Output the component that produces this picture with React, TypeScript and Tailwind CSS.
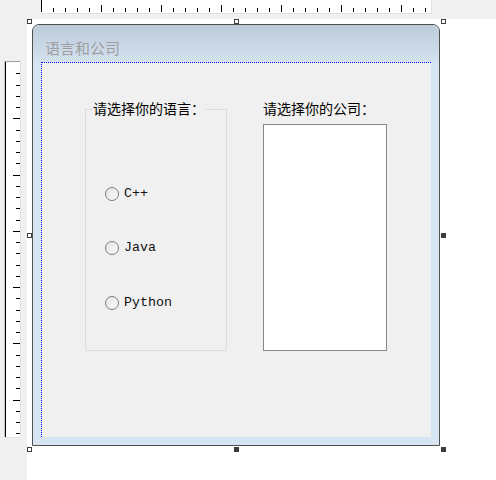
import React from 'react';

const hTicks = Array.from({ length: 32 }, (_, i) => i);
const vTicks = Array.from({ length: 33 }, (_, i) => i);

function HRuler() {
  return (
    <svg width="391" height="14" className="block">
      <rect x="0" y="0" width="391" height="14" fill="#fff" />
      <line x1="0.5" y1="0" x2="0.5" y2="12" stroke="#000" />
      {hTicks.map(i => {
        const x = Math.round(12 + 12 * i) + 0.5;
        const long = i % 5 === 4;
        return <line key={i} x1={x} x2={x} y1={long ? 5 : 8} y2={12} stroke="#000" />;
      })}
      <line x1="390.5" y1="0" x2="390.5" y2="14" stroke="#e2e2e2" />
      <line x1="0" y1="13.5" x2="391" y2="13.5" stroke="#e2e2e2" />
    </svg>
  );
}

function VRuler() {
  return (
    <svg width="17" height="377" className="block">
      <rect x="0" y="0" width="17" height="377" fill="#fff" />
      <line x1="0" y1="0.5" x2="17" y2="0.5" stroke="#a0a0a0" />
      <line x1="0.5" y1="0" x2="0.5" y2="377" stroke="#c8c8c8" />
      <line x1="1.5" y1="1" x2="1.5" y2="376" stroke="#000" />
      {vTicks.map(i => {
        const y = Math.round(12.3 + 11.25 * i) + 0.5;
        const long = i % 5 === 4;
        return <line key={i} x1={long ? 9 : 12} x2={16} y1={y} y2={y} stroke="#000" />;
      })}
      <line x1="16.5" y1="0" x2="16.5" y2="377" stroke="#e2e2e2" />
      <line x1="0" y1="376.5" x2="17" y2="376.5" stroke="#e2e2e2" />
    </svg>
  );
}

function Radio({ label }: { label: string }) {
  return (
    <div className="h-[14px] flex items-center gap-[5px]">
      <span className="w-[14px] h-[14px] rounded-full border border-[#7c7c7c] bg-gradient-to-br from-[#e4e4e4] to-[#fbfbfb] shrink-0" />
      <span className="font-['Liberation_Mono',monospace] text-[13.3px] leading-[14px] text-[#111]">{label}</span>
    </div>
  );
}

function Handle({ pos, filled }: { pos: string; filled?: boolean }) {
  return (
    <span
      className={`absolute w-[5px] h-[5px] border border-[#3c3c3c] ${filled ? 'bg-[#3c3c3c]' : 'bg-white'} ${pos}`}
    />
  );
}

export default function App() {
  return (
    <div className="w-[496px] h-[480px] bg-[#f0f0f0] overflow-hidden flex flex-col font-['Noto_Sans_CJK_SC',sans-serif]">
      <div className="h-[19px] shrink-0 pl-[41px]">
        <HRuler />
      </div>
      <div className="flex flex-1">
        <div className="w-[27px] shrink-0 pl-[4px] pt-[42px]">
          <VRuler />
        </div>
        <div className="flex-1 bg-white pl-[5px] pt-[5px]">
          <div className="relative w-[408px] h-[422px]">
            <div className="w-full h-full border border-[#505050] rounded-t-[7px] flex flex-col overflow-hidden bg-[#d7e4f2]">
              <div className="h-[37px] shrink-0 bg-gradient-to-b from-[#bccad9] to-[#d4e1f0] pl-[12px] pt-[13px] text-[15px] leading-[20px] text-[#9e9e9e]">
                语言和公司
              </div>
              <div className="flex-1 flex px-[8px] pb-[8px]">
                <div className="flex-1 flex bg-[#f0f0f0] border-t border-l border-dotted border-[#0000ee] pl-[43px] pt-[46px] text-[14px] text-black">
                  <div className="relative w-[142px] h-[242px] shrink-0 border border-[#dcdcdc]">
                    <span className="absolute -top-[10px] left-[6px] px-[1px] bg-[#f0f0f0] leading-[16px]">
                      请选择你的语言：
                    </span>
                    <div className="flex flex-col pl-[19px] pt-[77px]">
                      <Radio label="C++" />
                      <div className="mt-[40px]">
                        <Radio label="Java" />
                      </div>
                      <div className="mt-[41px]">
                        <Radio label="Python" />
                      </div>
                    </div>
                  </div>
                  <div className="ml-[36px] mt-[-9px] flex flex-col">
                    <div className="h-[16px] leading-[16px]">请选择你的公司：</div>
                    <div className="mt-[8px] w-[124px] h-[227px] border border-[#828790] bg-white" />
                  </div>
                </div>
              </div>
            </div>
            <Handle pos="-left-[5px] -top-[5px]" />
            <Handle pos="left-[202px] -top-[5px]" />
            <Handle pos="left-[409px] -top-[5px]" />
            <Handle pos="-left-[5px] top-[209px]" />
            <Handle pos="-left-[5px] top-[423px]" />
            <Handle pos="left-[202px] top-[423px]" filled />
            <Handle pos="left-[409px] top-[423px]" filled />
            <Handle pos="left-[409px] top-[209px]" filled />
          </div>
        </div>
      </div>
    </div>
  );
}
